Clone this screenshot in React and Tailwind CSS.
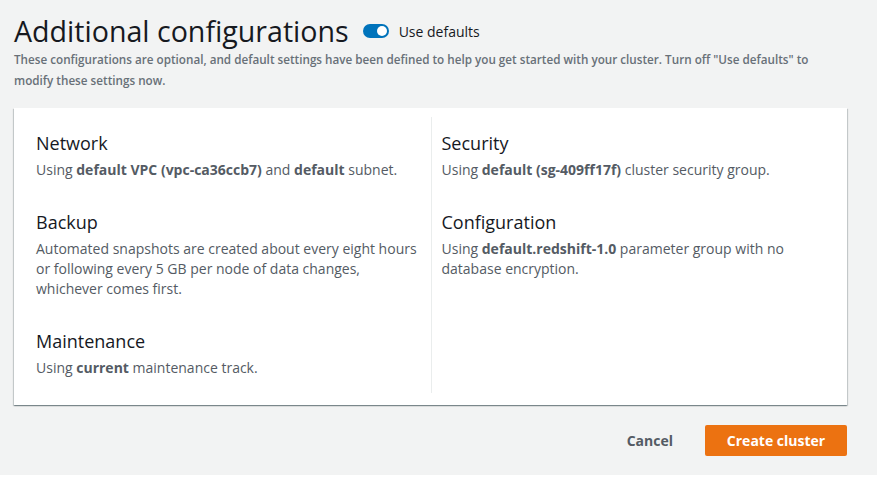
const font = { fontFamily: '"Open Sans", "Liberation Sans", sans-serif' };

const sections = {
  left: [
    {
      title: 'Network',
      body: (
        <>
          Using <b className="font-bold">default VPC (vpc-ca36ccb7)</b> and <b className="font-bold">default</b> subnet.
        </>
      ),
    },
    {
      title: 'Backup',
      body: (
        <>
          Automated snapshots are created about every eight hours or following every 5 GB per node of data changes,
          whichever comes first.
        </>
      ),
    },
    {
      title: 'Maintenance',
      body: (
        <>
          Using <b className="font-bold">current</b> maintenance track.
        </>
      ),
    },
  ],
  right: [
    {
      title: 'Security',
      body: (
        <>
          Using <b className="font-bold">default (sg-409ff17f)</b> cluster security group.
        </>
      ),
    },
    {
      title: 'Configuration',
      body: (
        <>
          Using <b className="font-bold">default.redshift-1.0</b> parameter group with no database encryption.
        </>
      ),
    },
  ],
};

const Item = ({ title, body }) => (
  <div>
    <h3 className="text-[18px] leading-[22px] text-[#16191f]">{title}</h3>
    <p className="mt-[6px] text-[14px] leading-[20px] text-[#545b64]">{body}</p>
  </div>
);

const Toggle = () => (
  <span className="relative inline-flex h-[14px] w-[26px] items-center rounded-full bg-[#0073bb]">
    <span className="absolute right-[2px] h-[10px] w-[10px] rounded-full bg-white" />
  </span>
);

export default function App() {
  return (
    <div className="h-[475px] bg-[#f2f3f3] pl-[14px] pr-[30px] pt-[13px]" style={font}>
      <div className="flex items-center">
        <h1 className="text-[28.6px] leading-[36px] text-[#16191f]">Additional configurations</h1>
        <div className="ml-[14px] flex items-center gap-[10px]">
          <Toggle />
          <span className="text-[14px] text-[#16191f]">Use defaults</span>
        </div>
      </div>
      <p className="text-[11.7px] font-semibold leading-[21px] text-[#687078]">
        These configurations are optional, and default settings have been defined to help you get started with your
        cluster. Turn off "Use defaults" to modify these settings now.
      </p>

      <div
        className="mt-[17px] bg-white px-[12px] pb-[12px] pt-[9px]"
        style={{ boxShadow: '0 1px 1px 0 rgba(0,28,36,.3), 1px 1px 1px 0 rgba(0,28,36,.15), -1px 1px 1px 0 rgba(0,28,36,.15)' }}
      >
        <div className="grid grid-cols-2">
          <div className="flex flex-col gap-[31px] px-[10px] pb-[15px] pt-[15px]">
            {sections.left.map((s) => (
              <Item key={s.title} {...s} />
            ))}
          </div>
          <div className="flex flex-col gap-[31px] border-l border-[#eaeded] px-[10px] pb-[15px] pt-[15px]">
            {sections.right.map((s) => (
              <Item key={s.title} {...s} />
            ))}
          </div>
        </div>
      </div>

      <div className="mt-[20px] flex items-center justify-end gap-[32px]">
        <button className="text-[14px] font-bold text-[#545b64]">Cancel</button>
        <button className="h-[31px] w-[142px] rounded-[2px] bg-[#ec7211] text-[14px] font-bold text-white">
          Create cluster
        </button>
      </div>
    </div>
  );
}
